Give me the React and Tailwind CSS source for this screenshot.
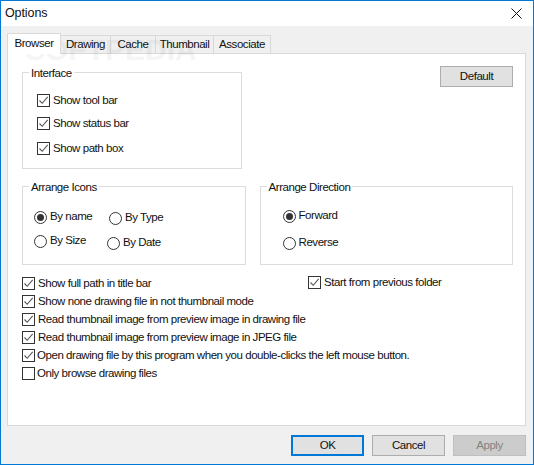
const FONT = "font-['Liberation_Sans',sans-serif]";

function Check({ on = true, label, labelClass = "ml-[3px]", className = "" }) {
  return (
    <label className={"flex items-center h-[18px] " + className}>
      <span className="w-[13px] h-[13px] border border-[#333] bg-white shrink-0 flex items-center justify-center">
        {on && (
          <svg width="11" height="11" viewBox="0 0 11 11" fill="none">
            <path d="M1.5 5.5 L4.2 8.3 L9.7 1.8" stroke="#555" strokeWidth="1.1" />
          </svg>
        )}
      </span>
      <span className={labelClass + " whitespace-nowrap pt-px"}>{label}</span>
    </label>
  );
}

function Radio({ on = false, label, className = "" }) {
  return (
    <label className={"flex items-center h-[18px] " + className}>
      <span className="w-[13px] h-[13px] rounded-full border border-[#333] bg-white shrink-0 flex items-center justify-center">
        {on && <span className="w-[7px] h-[7px] rounded-full bg-[#333]" />}
      </span>
      <span className="ml-[3px] whitespace-nowrap">{label}</span>
    </label>
  );
}

function Group({ title, className = "", children }) {
  return (
    <div className={"relative border border-[#dcdcdc] " + className}>
      <span className="absolute -top-[9px] left-[6px] bg-white px-[2px] leading-[18px] h-[17px]">{title}</span>
      {children}
    </div>
  );
}

function Tab({ label, className = "" }) {
  return (
    <div className={"h-[18px] bg-[#f0f0f0] border border-b-0 border-l-0 border-[#d9d9d9] flex items-center justify-center pt-px " + className}>
      {label}
    </div>
  );
}

function Btn({ label, className = "" }) {
  return (
    <div className={"w-[73px] h-[21px] flex items-center justify-center border pt-px " + className}>{label}</div>
  );
}

export default function App() {
  return (
    <div className={FONT + " w-[534px] h-[465px] relative flex flex-col border border-[#0078d7] bg-[#f0f0f0] text-[11.5px] tracking-[-0.45px] text-[#111]"}>
      <div className="h-[25px] bg-white flex items-center justify-between pl-[4px] pr-[11px] shrink-0">
        <span className="text-[12.5px] tracking-[-0.1px]">Options</span>
        <svg width="11" height="11" viewBox="0 0 11 11" fill="none">
          <path d="M0.5 0.5 L10.5 10.5 M10.5 0.5 L0.5 10.5" stroke="#111" strokeWidth="1" />
        </svg>
      </div>

      <div className="pl-[6px] pt-[7px] pr-[8px] flex flex-col">
        <div className="flex items-end h-[20px]">
          <div className="w-[54px] h-[21px] self-start relative z-10 bg-white border border-b-0 border-[#d9d9d9] flex items-center justify-center pb-px">Browser</div>
          <Tab label="Drawing" className="w-[50px]" />
          <Tab label="Cache" className="w-[45px]" />
          <Tab label="Thumbnail" className="w-[58px]" />
          <Tab label="Associate" className="w-[57px]" />
        </div>
        <div className="w-[519px] h-[373px] bg-white border border-[#d9d9d9] pl-[14px] pr-[12px] pt-[12px]">
          <div className="flex justify-between items-start">
            <Group title="Interface" className="w-[220px] h-[97px] mt-[6px] pl-[14px] pt-[18px]">
              <Check label="Show tool bar" />
              <Check label="Show status bar" className="mt-[5px]" />
              <Check label="Show path box" className="mt-[7px]" />
            </Group>
            <Btn label="Default" className="bg-[#e1e1e1] border-[#adadad]" />
          </div>

          <div className="flex mt-[17px]">
            <Group title="Arrange Icons" className="w-[224px] h-[79px] px-[11px] pt-[21px]">
              <div className="flex">
                <Radio on label="By name" className="w-[75px]" />
                <Radio label="By Type" className="mt-px" />
              </div>
              <div className="flex mt-[5px]">
                <Radio label="By Size" className="w-[73px]" />
                <Radio label="By Date" className="mt-[2px]" />
              </div>
            </Group>
            <Group title="Arrange Direction" className="w-[254px] h-[79px] ml-[14px] pl-[22px] pt-[20px]">
              <Radio on label="Forward" />
              <Radio label="Reverse" className="mt-[9px]" />
            </Group>
          </div>

          <div className="mt-[9px] relative">
            <Check label="Show full path in title bar" />
            <Check label="Show none drawing file in not thumbnail mode" />
            <Check label="Read thumbnail image from preview image in drawing file" />
            <Check label="Read thumbnail image from preview image in JPEG file" />
            <Check label="Open drawing file by this program when you double-clicks the left mouse button." labelClass="ml-[2px]" />
            <Check on={false} label="Only browse drawing files" labelClass="ml-[2px]" />
            <Check label="Start from previous folder" className="absolute left-[286px] -top-px" />
          </div>
        </div>
      </div>

      <div className="flex justify-end gap-[8px] pr-[7px] mt-[9px]">
        <Btn label="OK" className="bg-[#e1e1e1] border-2 border-[#0078d7]" />
        <Btn label="Cancel" className="bg-[#e1e1e1] border-[#adadad]" />
        <Btn label="Apply" className="bg-[#cccccc] border-[#bfbfbf] text-[#838383]" />
      </div>

      <span className="absolute left-[24px] top-[26px] text-[30px] font-bold tracking-[0px] text-[#000] opacity-[0.035] pointer-events-none">SOFTPEDIA</span>
    </div>
  );
}
